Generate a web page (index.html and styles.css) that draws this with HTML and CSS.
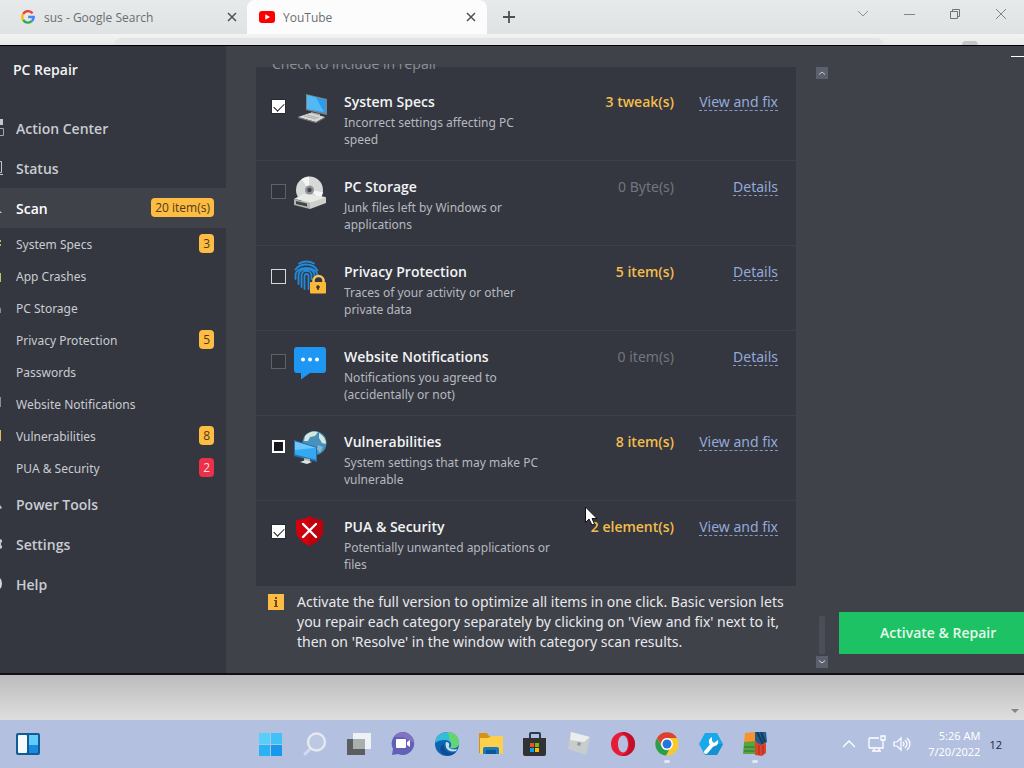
FILE: index.html
```html
<!DOCTYPE html>
<html lang="en">
<head>
<meta charset="utf-8">
<title>PC Repair</title>
<link rel="stylesheet" href="styles.css">
</head>
<body>
<header class="tabbar">
  <div class="tab">
    <svg class="tab-icon" width="16" height="16" viewBox="0 0 16 16" fill="none" stroke-width="2.4"><path d="M12.6 4.2A5.7 5.7 0 0 0 3.2 5" stroke="#ea4335"/><path d="M3.2 5a5.7 5.7 0 0 0 0 6" stroke="#fbbc05"/><path d="M3.2 11a5.7 5.7 0 0 0 8.6 1.2" stroke="#34a853"/><path d="M11.8 12.2A5.5 5.5 0 0 0 13.7 8H8.2" stroke="#4285f4"/></svg>
    <span class="tab-title">sus - Google Search</span>
    <button class="plain" aria-label="Close sus tab"><svg width="10" height="10" viewBox="0 0 10 10" stroke="#4d5154" stroke-width="1.5"><path d="M1 1l8 8M9 1l-8 8"/></svg></button>
  </div>
  <div class="tab tab-active">
    <svg class="tab-icon" width="16" height="16" viewBox="0 0 16 16"><rect y="2" width="16" height="12" rx="3" fill="#f00"/><path d="M6.3 5.3L11 8l-4.700 2.700z" fill="#fff"/></svg>
    <span class="tab-title">YouTube</span>
    <button class="plain" aria-label="Close YouTube tab"><svg width="10" height="10" viewBox="0 0 10 10" stroke="#4d5154" stroke-width="1.500"><path d="M1 1l8 8M9 1l-8 8"/></svg></button>
  </div>
  <button class="plain new-tab" aria-label="New tab"><svg width="12" height="12" viewBox="0 0 12 12" stroke="#4d5154" stroke-width="1.800"><path d="M6 0v12M0 6h12"/></svg></button>
  <div class="window-controls">
    <button class="plain" aria-label="Search tabs"><svg width="12" height="12" viewBox="0 0 12 12" fill="none" stroke="#8a9294"><path d="M1 3l5 5 5-5"/></svg></button>
    <button class="plain" aria-label="Minimize"><svg width="12" height="12" viewBox="0 0 12 12" stroke="#7f8789"><path d="M1 6.500h11"/></svg></button>
    <button class="plain" aria-label="Restore"><svg width="12" height="12" viewBox="0 0 12 12" fill="none" stroke="#6d7577"><path d="M1.500 3.500h7v7h-7zM3.500 3.500v-2h7v7h-2"/></svg></button>
    <button class="plain" aria-label="Close"><svg width="12" height="12" viewBox="0 0 12 12" stroke="#7f8789"><path d="M1 1l10 10M11 1L1 11"/></svg></button>
  </div>
</header>
<div class="toolbar"><span class="address"></span><span class="avatar"></span></div>

<div class="app">
  <aside class="sidebar">
    <h1 class="app-name">PC Repair</h1>
    <nav>
      <a class="nav" href="#action"><svg class="edge" viewBox="0 0 16 20"><path d="M0 1h3v6H0z" fill="#c3c6cc"/><path d="M0 10.500h3.500v7H0" fill="none" stroke="#a3a6ac"/></svg>Action Center</a>
      <a class="nav" href="#status"><svg class="edge" viewBox="0 0 16 20" fill="none" stroke="#c3c6cc"><path d="M0 3.500h1.500v11H0M0 16.500h3"/></svg>Status</a>
      <a class="nav nav-on" href="#scan"><svg class="edge" viewBox="0 0 16 20"><path d="M0 13l2 2H0z" fill="#c3c6cc"/></svg>Scan<span class="badge">20 item(s)</span></a>
      <a class="nav sub" href="#specs"><svg class="edge" viewBox="0 0 16 20"><path d="M0 6h1v2H0zM0 10h1v2H0z" fill="#d0b659"/></svg>System Specs<span class="badge">3</span></a>
      <a class="nav sub" href="#crashes"><svg class="edge" viewBox="0 0 16 20"><path d="M0 7h1v9H0z" fill="#b4c86a"/></svg>App Crashes</a>
      <a class="nav sub" href="#storage"><svg class="edge" viewBox="0 0 16 20"><path d="M0 9l1 2v4H0" fill="#8b8f95"/></svg>PC Storage</a>
      <a class="nav sub" href="#privacy"><span class="edge"></span>Privacy Protection<span class="badge">5</span></a>
      <a class="nav sub" href="#passwords"><span class="edge"></span>Passwords</a>
      <a class="nav sub" href="#website"><svg class="edge" viewBox="0 0 16 20"><path d="M0 3h1v10H0z" fill="#8b8f95"/></svg>Website Notifications</a>
      <a class="nav sub" href="#vulnerabilities"><svg class="edge" viewBox="0 0 16 20"><path d="M0 4h1v11H0z" fill="#e7b85a"/></svg>Vulnerabilities<span class="badge">8</span></a>
      <a class="nav sub" href="#pua"><span class="edge"></span>PUA &amp; Security<span class="badge badge-red">2</span></a>
      <a class="nav" href="#tools"><svg class="edge" viewBox="0 0 16 20"><path d="M0 11l2 3-2 1z" fill="#c3c6cc"/></svg>Power Tools</a>
      <a class="nav" href="#settings"><svg class="edge" viewBox="0 0 16 20"><path d="M0 5l2 1v2L1 9v2l1 1v2l-2 1z" fill="#c3c6cc"/></svg>Settings</a>
      <a class="nav" href="#help"><svg class="edge" viewBox="0 0 16 20"><path d="M0 4q2 2 2 5.500T0 15z" fill="#d5d7db"/></svg>Help</a>
    </nav>
  </aside>

  <main class="results">
    <div class="list-area">
      <div class="clip"><span>Check to include in repair</span></div>
      <ul class="rows">
        <li class="row">
          <input class="check" type="checkbox" id="c1" checked>
          <svg class="row-icon" viewBox="0 0 34 34"><path d="M12 2l21 5v16l-21-5z" fill="#75878f"/><path d="M13 3l18.500 5v13L13 17z" fill="#2a9df0"/><path d="M13 3l9 2.600L30 20l-17-3z" fill="#52b8f6"/><path d="M17 20l9 2v3h-9z" fill="#a9aaa7"/><path d="M4 25l12-4 15 4-9 5z" fill="#d9dad7"/><path d="M4 25l18 5 9-5v1l-9 5-18-5z" fill="#7d8184"/><path d="M10 24l12 3M13 23l12 3" stroke="#aaa"/></svg>
          <div class="info"><label for="c1">System Specs</label><p>Incorrect settings affecting PC<br>speed</p></div>
          <span class="count">3 tweak(s)</span><span class="act"><a href="#fix1">View and fix</a></span>
        </li>
        <li class="row">
          <input class="check" type="checkbox" id="c2" disabled>
          <svg class="row-icon" viewBox="0 0 34 34"><circle cx="15.500" cy="13" r="13.500" fill="#d7d9d8"/><path d="M15.500 13L7.500 2.500A13.500 13.500 0 0 1 15-.5zM15.500 13L26 22a13.500 13.500 0 0 0 3-7z" fill="#f5f5f3"/><circle cx="15.500" cy="13" r="4.500" fill="#8c9293"/><circle cx="15.500" cy="13" r="2.200" fill="#42484b"/><path d="M0 22l9-5 23 3-10 6z" fill="#e9e9e6"/><path d="M0 22l16 4v6L0 28z" fill="#b1b4b1"/><path d="M16 26l16-6v6l-16 6z" fill="#cfd0cd"/><path d="M2 24l11 2.500v3L2 27z" fill="#414546"/></svg>
          <div class="info"><label for="c2">PC Storage</label><p>Junk files left by Windows or<br>applications</p></div>
          <span class="count none">0 Byte(s)</span><span class="act"><a href="#d2">Details</a></span>
        </li>
        <li class="row">
          <input class="check" type="checkbox" id="c3">
          <svg class="row-icon" viewBox="0 0 34 34" fill="none"><g stroke="#2389d9" stroke-width="1.800" stroke-linecap="round"><path d="M5 1.500Q12.500-2.500 20 1.500M1.500 7.500Q5 2.500 12.500 2.500t11 6M1.500 17v-4C1.500 3.500 23.500 3.500 23.500 14M4.500 22v-9c0-8 16-8 16 0v1M7.500 25V14c0-7 10-7 10 0v3M10.500 27V14.500c0-3.500 4-3.500 4 0V27"/></g><path d="M19.500 22v-3a5 5 0 0 1 10 0v3" stroke="#f4c559" stroke-width="2.500"/><rect x="16" y="20" width="16" height="11.500" rx="1" fill="#fbb938"/><circle cx="24" cy="25" r="1.800" fill="#33353b"/><path d="M24 25v3" stroke="#33353b" stroke-width="1.500"/></svg>
          <div class="info"><label for="c3">Privacy Protection</label><p>Traces of your activity or other<br>private data</p></div>
          <span class="count">5 item(s)</span><span class="act"><a href="#d3">Details</a></span>
        </li>
        <li class="row">
          <input class="check" type="checkbox" id="c4" disabled>
          <svg class="row-icon" viewBox="0 0 34 34"><path d="M3 0h26q3 0 3 3v20q0 3-3 3H16l-9 6.500V26H3q-3 0-3-3V3q0-3 3-3z" fill="#1e96f3"/><circle cx="9" cy="12.500" r="2" fill="#fff"/><circle cx="16" cy="12.500" r="2" fill="#fff"/><circle cx="23" cy="12.500" r="2" fill="#fff"/></svg>
          <div class="info"><label for="c4">Website Notifications</label><p>Notifications you agreed to<br>(accidentally or not)</p></div>
          <span class="count none">0 item(s)</span><span class="act"><a href="#d4">Details</a></span>
        </li>
        <li class="row">
          <input class="check check-focus" type="checkbox" id="c5">
          <svg class="row-icon" viewBox="0 0 34 34"><circle cx="20.500" cy="11" r="12" fill="#4791bc"/><path d="M11 4q5-6 13-4l-3 4-5 1-2 4h-4zM25 1q7 4 7 11l-4-1-3-5z" fill="#d3e8dc"/><path d="M24 13l5 2-3 6-3-4z" fill="#7fb9d2"/><path d="M0 8l23 7v15L0 24z" fill="#2672a5"/><path d="M1 9.500l21 6.300v12L1 22.500z" fill="#35a8f2"/><path d="M1 9.500l21 6.300L1 18z" fill="#6cc6fa"/><path d="M10 26l6 1v3h-6z" fill="#a9b4ba"/><path d="M6 30l6-2 6 2-5 2z" fill="#dfe3e3"/></svg>
          <div class="info"><label for="c5">Vulnerabilities</label><p>System settings that may make PC<br>vulnerable</p></div>
          <span class="count">8 item(s)</span><span class="act"><a href="#fix5">View and fix</a></span>
        </li>
        <li class="row">
          <input class="check" type="checkbox" id="c6" checked>
          <svg class="row-icon" viewBox="0 0 34 34"><path d="M15.500-1Q21 3 29 3v10q0 10-13.500 16Q2 23 2 13V3q8 0 13.500-4z" fill="#d1000f"/><path d="M15.500-1Q21 3 29 3v10q0 10-13.500 16z" fill="#bd000c"/><path d="M9 7l13 13M22 7L9 20" stroke="#fff" stroke-width="2.400" stroke-linecap="round"/></svg>
          <div class="info"><label for="c6">PUA &amp; Security</label><p>Potentially unwanted applications or<br>files</p></div>
          <span class="count">2 element(s)</span><span class="act"><a href="#fix6">View and fix</a></span>
        </li>
      </ul>
      <div class="note">
        <svg class="note-icon" width="16" height="16" viewBox="0 0 16 16"><path d="M0 0h16v16H0z" fill="#fdbc42"/><path d="M7 3h2v2H7zM6 6h3v6h1v1H6v-1h1V7H6z" fill="#6c4b20"/></svg>
        <p>Activate the full version to optimize all items in one click. Basic version lets<br>you repair each category separately by clicking on 'View and fix' next to it,<br>then on 'Resolve' in the window with category scan results.</p>
      </div>
    </div>
    <div class="scroll">
      <button class="plain arrow" aria-label="Scroll up"><svg width="6" height="4" viewBox="0 0 6 4" fill="none" stroke="#c3cad2"><path d="M0 3.500L3 1l3 2.500"/></svg></button>
      <span class="thumb"></span>
      <button class="plain arrow" aria-label="Scroll down"><svg width="6" height="4" viewBox="0 0 6 4" fill="none" stroke="#d3dae2"><path d="M0 .5L3 3l3-2.500"/></svg></button>
    </div>
    <div class="action">
      <button class="plain app-min" aria-label="Minimize PC Repair"><svg width="13" height="2" viewBox="0 0 13 2"><path d="M0 0h13v1H0z" fill="#fff"/></svg></button>
      <button class="activate">Activate &amp; Repair</button>
    </div>
  </main>
</div>

<div class="page-edge"><svg width="8" height="5" viewBox="0 0 8 5"><path d="M0 0h8L4 4z" fill="#858585"/></svg></div>

<footer class="taskbar">
  <div class="task-left"><button class="plain" aria-label="Widgets"><svg width="24" height="22" viewBox="0 0 24 22"><rect width="24" height="22" rx="2" fill="#125b99"/><rect x="2" y="2" width="9" height="18" rx="1" fill="#f6fafc"/><rect x="13" y="2" width="9" height="11" fill="#62cdfb"/><path d="M13 12h9v7q0 1-1 1h-8z" fill="#168be0"/></svg></button></div>
  <div class="task-apps">
    <button class="plain task" aria-label="Start"><svg viewBox="0 0 24 24"><path d="M0 1h11v11H0z" fill="#58cff9"/><path d="M12 1h11v11H12z" fill="#40c1f7"/><path d="M0 13h11v11H0z" fill="#29b2f4"/><path d="M12 13h11v11H12z" fill="#1499ed"/></svg></button>
    <button class="plain task" aria-label="Search"><svg viewBox="0 0 24 24" fill="none"><path d="M8 16l-6 6" stroke="#d5d9ec" stroke-width="3" stroke-linecap="round"/><circle cx="13.500" cy="10" r="8.500" fill="#bdc8e3" stroke="#e7e9f1" stroke-width="2.400"/></svg></button>
    <button class="plain task" aria-label="Task view"><svg viewBox="0 0 24 24"><path d="M0 7h18v16H0z" fill="#5b5d5f"/><path d="M6 1h18v16H6z" fill="#eff2f4"/><path d="M6 7h12v10H6z" fill="#a9afae"/></svg></button>
    <button class="plain task" aria-label="Chat"><svg viewBox="0 0 24 24"><path d="M12 0a11.500 11.500 0 1 1-5 22l-6 1 1-6A11.500 11.500 0 0 1 12 0z" fill="#6260b7"/><path d="M12 0a11.500 11.500 0 0 1 11 11L12 5 3 5q3-5 9-5z" fill="#8173bf"/><rect x="5" y="7" width="10" height="9" rx="1" fill="#fff"/><path d="M16 10l3-2v7l-3-2z" fill="#fff"/></svg></button>
    <button class="plain task" aria-label="Edge"><svg viewBox="0 0 24 24"><circle cx="12" cy="12" r="12" fill="#0c64b4"/><path d="M0 11C1 4 6 0 12 0c8 0 12 5 12 11 0 4-4 6-9 5 3-4 0-8-5-8-4 0-8 1-10 3z" fill="#35bcd8"/><path d="M13 0c7 0 11 5 11 11 0 4-4 6-9 5 2-2 2-5 0-7z" fill="#65d66f"/><path d="M9 12c-1 7 6 11 12 8-3 4-12 5-15 0-2-3 0-7 3-8z" fill="#134b91"/><path d="M11 10c2 0 4 1 3 4-1 3 5 4 8 3l-1 2c-7 2-12-3-10-9z" fill="#c7dce9"/></svg></button>
    <button class="plain task" aria-label="File Explorer"><svg viewBox="0 0 24 24"><path d="M0 1h8l2 3h12q2 0 2 2v15H0z" fill="#d9920e"/><path d="M1 6h8l3-2h12v17q0 1-1 1H1z" fill="#fcd04c"/><path d="M4 17q0-2 2-2h12q2 0 2 2v5H4z" fill="#187abc"/><path d="M7 18h10v4H7z" fill="#0b5695"/></svg></button>
    <button class="plain task" aria-label="Microsoft Store"><svg viewBox="0 0 24 24"><path d="M7 7V2q0-1 1-1h8q1 0 1 1v5" fill="none" stroke="#243c4d" stroke-width="2"/><path d="M0 6h23v16q0 2-2 2H2q-2 0-2-2z" fill="#303233"/><path d="M7 11h4v4H7z" fill="#f25022"/><path d="M12 11h4v4h-4z" fill="#7fba00"/><path d="M7 16h4v4H7z" fill="#00a4ef"/><path d="M12 16h4v4h-4z" fill="#ffb900"/></svg></button>
    <button class="plain task" aria-label="Roblox"><svg viewBox="0 0 24 24"><path d="M4 0l19 5-4 18L1 17z" fill="#c7cccd"/><path d="M4 0l19 5-6 5L3 8z" fill="#eceeee"/><path d="M11 10l3 1-1 3-3-1z" fill="#8d979c"/></svg></button>
    <button class="plain task" aria-label="Opera"><svg viewBox="0 0 24 24"><path fill-rule="evenodd" d="M12 0a12 12 0 1 0 0 24 12 12 0 0 0 0-24zm0 3.500c3 0 5 4 5 8.500s-2 8.500-5 8.500S7 16.500 7 12s2-8.500 5-8.500z" fill="#e71d36"/><path d="M12 0a12 12 0 0 1 0 24l-3-1c5 1 9-4 9-11S14 1 10 2z" fill="#c40e2c"/></svg></button>
    <button class="plain task running" aria-label="Chrome"><svg viewBox="0 0 24 24"><circle cx="12" cy="12" r="11.500" fill="#f8c92d"/><path d="M2 6a11.500 11.500 0 0 1 20 0H12a6 6 0 0 0-5 8z" fill="#dd4132"/><path d="M2 6l5 9q2 4 7 3l-3 5.500A11.500 11.500 0 0 1 2 6z" fill="#289e50"/><circle cx="12" cy="12" r="6" fill="#fff"/><circle cx="12" cy="12" r="4.500" fill="#2375df"/></svg></button>
    <button class="plain task" aria-label="PC Repair tool"><svg viewBox="0 0 24 24"><path d="M6 1h12l6 11-6 11H6L0 12z" fill="#19a9e8"/><path d="M6 23l6-11 12 0-6 11z" fill="#1591d1"/><path d="M7 20l6-7" stroke="#fff" stroke-width="4" stroke-linecap="round"/><path d="M13 5q-4 2-3 6 2 4 6 3 4-1 3-6l-4 3-2-2z" fill="#fff"/></svg></button>
    <button class="plain task running" aria-label="AVG"><svg viewBox="0 0 24 24"><path d="M2 1l10-1v11H1z" fill="#f6932d"/><path d="M12 0h11l1 10-7 5-5-5z" fill="#245d8d"/><path d="M14 0l6 12M18 0l4 10" stroke="#133c61" stroke-width="2"/><path d="M1 10l12-1v13H0z" fill="#57a53f"/><path d="M1 15h11M1 19h11" stroke="#26713a"/><path d="M12 9l6 4 5-3v11l-4 3-7-1z" fill="#d9442c"/><path d="M16 13v10M20 13v9" stroke="#ac2722"/></svg></button>
  </div>
  <div class="tray">
    <button class="plain" aria-label="Show hidden icons"><svg width="12" height="8" viewBox="0 0 12 8" fill="none" stroke="#fff" stroke-width="1.400"><path d="M0 7l6-6 6 6"/></svg></button>
    <svg width="18" height="18" viewBox="0 0 18 18" fill="none" stroke="#fff" stroke-width="1.300"><path d="M11 3H2q-1 0-1 1v8q0 1 1 1h13V6M4 16h9M6 13v3M11 13v3M13 1h4v4h-4zM15 5v3"/></svg>
    <svg width="18" height="16" viewBox="0 0 18 16" fill="none" stroke="#fff" stroke-width="1.200"><path d="M1 6h3l4-4v12l-4-4H1zM10 6q2 2 0 4M12 4q4 4 0 8M14 2q6 6 0 12"/></svg>
    <div class="clock">5:26 AM<br>7/20/2022</div>
    <span class="notices">12</span>
  </div>
</footer>
<svg class="cursor" width="13" height="20" viewBox="0 0 13 20"><path d="M.5 1v15.500L4 13l3 6 2.500-1L7 12.500h5z" fill="#fff" stroke="#111"/></svg>
</body>
</html>
```
FILE: styles.css
```css
* { box-sizing: border-box; }
body { margin: 0; min-height: 100vh; display: flex; flex-direction: column; font-family: "Open Sans", "Noto Sans", sans-serif; font-size: 14px; background: #d8d8d8; overflow-x: hidden; }
h1, p, ul { margin: 0; padding: 0; }
a { text-decoration: none; color: inherit; }
.plain { border: 0; background: none; padding: 0; display: flex; align-items: center; justify-content: center; }

.tabbar { display: flex; height: 34px; background: linear-gradient(#e6eaeb, #dfe3e3); }
.tab { display: flex; align-items: center; width: 247px; padding: 0 10px 0 20px; color: #6a6e71; font-size: 12px; }
.tab-active { width: 240px; padding: 0 11px 0 12px; background: #fcfcfc; border-radius: 8px 8px 0 0; }
.tab-icon { margin-right: 8px; }
.tab-title { flex: 1; }
.new-tab { width: 44px; }
.window-controls { display: flex; margin-left: auto; gap: 34px; padding: 0 17px 6px 0; }
.toolbar { height: 11px; background: linear-gradient(#f3f3f3, #e9e9e9); display: flex; align-items: flex-end; padding: 0 46px 0 114px; }
.address { flex: 1; height: 7px; margin-right: 78px; background: #e2e4e5; border-radius: 8px 8px 0 0; }
.avatar { width: 16px; height: 4px; background: #c5c5c7; border-radius: 8px 8px 0 0; }

.app { flex: 1; display: flex; border-top: 1px solid #000; border-bottom: 2px solid #101114; background: #40424a; color: #c9ccd2; }
.sidebar { width: 226px; background: #34373f; }
.app-name { font-size: 14px; line-height: 20px; font-weight: 600; color: #f3f4f6; padding: 14px 13px 28px; }
.nav { display: flex; align-items: center; height: 40px; padding-right: 12px; font-size: 14px; font-weight: 600; }
.nav-on { background: #40424a; color: #fff; }
.sub { height: 32px; font-family: "Noto Sans", sans-serif; font-size: 12px; font-weight: 400; }
.edge { width: 16px; height: 20px; flex: none; }
.badge { margin: 0 0 2px auto; padding: 0 4px; line-height: 19px; border-radius: 4px; background: #fdbc42; color: #50391a; font-family: "Open Sans", sans-serif; font-size: 12px; font-weight: 400; }
.badge-red { background: #ee2f48; color: #f7dfe2; }

.results { flex: 1; display: flex; min-width: 0; padding-left: 30px; }
.list-area { width: 540px; padding-top: 18px; }
.clip { height: 12px; overflow: hidden; display: flex; align-items: flex-end; padding-left: 16px; background: linear-gradient(#40424a 3px, #34373f 3px); color: #8d9098; font-size: 14px; line-height: 12px; }
.clip span { height: 18px; }
.rows { list-style: none; background: #34373f; }
.row { display: flex; align-items: flex-start; height: 85px; padding: 16px 18px 0 15px; border-bottom: 1px solid #3d4048; }
.row:last-child { border-bottom-color: #34373f; }
.check { appearance: none; flex: none; width: 15px; height: 15px; margin: 7px 8px 0 0; border: 1px solid #d5d7db; background: #30333a; }
.check:disabled { border-color: #5e6168; }
.check:checked { border-color: #272a2f; background: #fff linear-gradient(#fff, #fff); }
.check:checked::before { content: ""; display: block; width: 9px; height: 5px; margin: 3px 0 0 2px; border: solid #222; border-width: 0 0 1px 1px; transform: rotate(-45deg); }
.check-focus { border: 2px solid #fff; width: 13px; height: 13px; margin: 8px 9px 0 1px; background: #17191d; }
.row-icon { width: 34px; height: 34px; flex: none; margin-right: 16px; overflow: visible; }
.info { flex: 1; white-space: nowrap; }
.info label { display: block; font-size: 14px; line-height: 20px; font-weight: 600; color: #f2f3f5; }
.info p { margin-top: 2px; font-family: "Noto Sans", sans-serif; font-size: 12px; line-height: 17px; color: #b6b9bf; }
.count { line-height: 20px; font-weight: 600; color: #f2bd4d; white-space: nowrap; }
.none { color: #72757c; font-weight: 400; font-family: "Noto Sans", sans-serif; }
.act { width: 104px; line-height: 17px; padding-top: 1px; text-align: right; color: #93a9dc; font-family: "Noto Sans", sans-serif; }
.act a { display: inline-block; border-bottom: 1px dashed #8397c8; }
.note { display: flex; padding: 6px 0 20px 12px; color: #e8e9ec; font-family: "Noto Sans", sans-serif; font-size: 14px; line-height: 20px; white-space: nowrap; }
.note-icon { flex: none; margin: 2px 13px 0 0; }
.scroll { width: 43px; display: flex; flex-direction: column; align-items: center; padding: 21px 0 5px 9px; }
.arrow { width: 12px; height: 12px; background: #5b616c; }
.thumb { width: 6px; height: 38px; margin: auto 0 2px; background: #4b4d59; border-radius: 2px 2px 0 0; }
.action { flex: 1; display: flex; flex-direction: column; justify-content: space-between; padding-bottom: 19px; }
.app-min { align-self: flex-end; padding: 10px 0 10px 2px; }
.activate { height: 42px; border: 0; padding: 0 26px 2px 41px; background: #1dc264; color: #e6f8ec; font-family: inherit; font-size: 14px; font-weight: 600; white-space: nowrap; text-align: left; }

.page-edge { height: 45px; display: flex; align-items: flex-end; justify-content: flex-end; padding: 0 5px 6px; background: linear-gradient(#bcbcbc, #dedede); }
.taskbar { height: 48px; display: grid; grid-template-columns: 1fr auto 1fr; align-items: center; background: #b3c0e0; }
.task-left { padding-left: 16px; }
.task-apps { display: flex; padding-left: 2px; }
.task { width: 44px; height: 48px; flex-direction: column; position: relative; }
.task svg { width: 24px; height: 24px; }
.running::after { content: ""; position: absolute; bottom: 5px; width: 6px; height: 3px; border-radius: 2px; background: #e3e6ee; }
.tray { display: flex; align-items: center; justify-content: flex-end; padding-right: 22px; color: #fff; }
.tray svg { margin-right: 7px; }
.tray button svg { margin-right: 13px; }
.clock { width: 62px; text-align: right; font-family: "Noto Sans", sans-serif; font-size: 11px; line-height: 16px; }
.notices { margin-left: 9px; font-size: 11px; color: #1d2740; }
.cursor { position: absolute; left: 585px; top: 506px; }
```
